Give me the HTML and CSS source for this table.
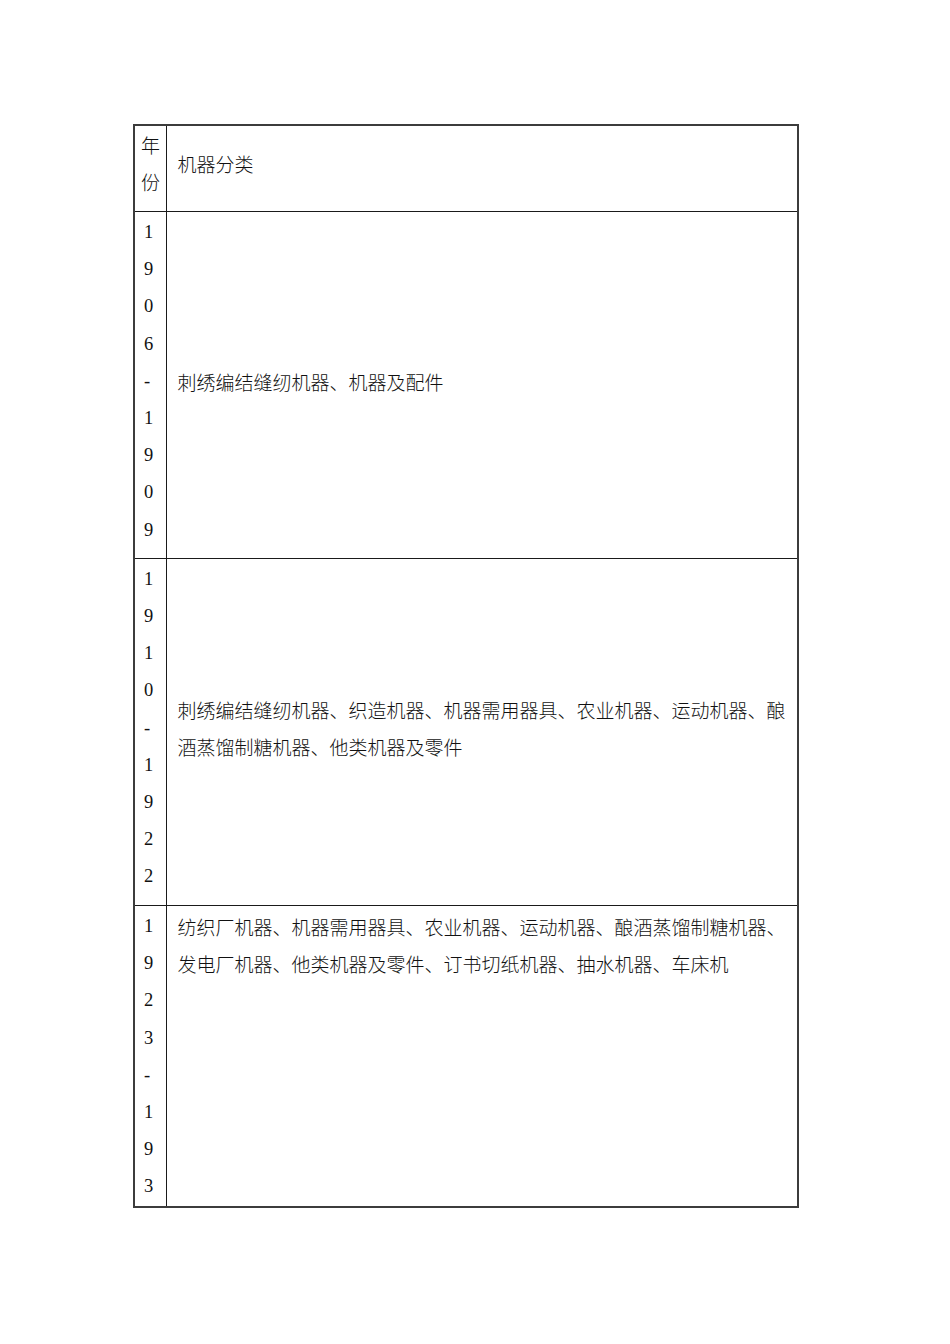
FILE: index.html
```html
<!DOCTYPE html>
<html lang="zh">
<head>
<meta charset="utf-8">
<title>机器分类</title>
<link rel="stylesheet" href="styles.css">
</head>
<body>
<div class="page">
  <table class="grid">
    <colgroup>
      <col class="col-year">
      <col class="col-cat">
    </colgroup>
    <tr class="row-head">
      <td class="year head"><span class="stack">年份</span></td>
      <td class="cat">机器分类</td>
    </tr>
    <tr class="row-mid">
      <td class="year num"><span class="stack">1906-1909</span></td>
      <td class="cat">刺绣编结缝纫机器、机器及配件</td>
    </tr>
    <tr class="row-mid">
      <td class="year num"><span class="stack">1910-1922</span></td>
      <td class="cat">刺绣编结缝纫机器、织造机器、机器需用器具、农业机器、运动机器、酿酒蒸馏制糖机器、他类机器及零件</td>
    </tr>
    <tr class="row-last">
      <td class="year num"><span class="stack">1923-193</span></td>
      <td class="cat">纺织厂机器、机器需用器具、农业机器、运动机器、酿酒蒸馏制糖机器、发电厂机器、他类机器及零件、订书切纸机器、抽水机器、车床机</td>
    </tr>
  </table>
</div>
</body>
</html>
```

FILE: styles.css
```css
html, body {
  margin: 0;
  padding: 0;
  background: #ffffff;
}

.page {
  padding: 124px 0 0 133px;
}

.grid {
  border-collapse: collapse;
  table-layout: fixed;
  width: 666px;
  border: 2px solid #3c3c3c;
  font-family: "Liberation Serif", "Noto Sans CJK SC", serif;
  font-size: 19px;
  line-height: 37.2px;
  color: #111111;
}

.col-year {
  width: 32px;
}

.grid td {
  border: 1px solid #1a1a1a;
  vertical-align: middle;
}

.row-head td {
  padding: 0 0 10.5px 0;
}

.row-mid td {
  padding: 2px 0 9px 0;
}

.row-last td {
  vertical-align: top;
  padding: 2.5px 0 0 0;
}

.grid td.year {
  padding-left: 6px;
  padding-right: 0;
}

.grid td.head {
  font-family: "Noto Sans CJK SC", sans-serif;
  font-weight: 300;
}

.stack {
  display: block;
  width: 12px;
  word-break: break-all;
}

.grid td.num {
  font-size: 18.5px;
  padding-left: 9px;
}

.grid td.cat {
  padding-left: 11px;
  padding-right: 8px;
  font-family: "Noto Sans CJK SC", sans-serif;
  font-weight: 300;
}
```
